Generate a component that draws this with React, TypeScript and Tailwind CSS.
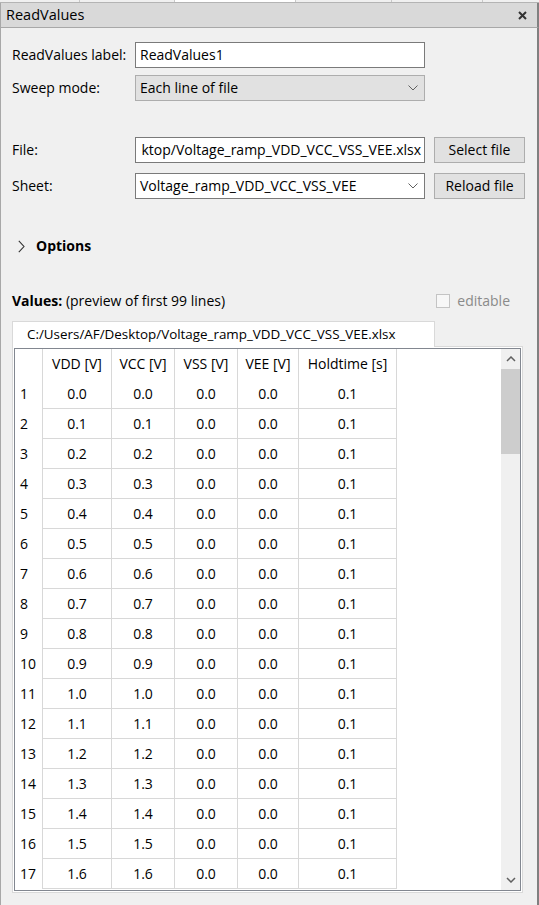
import React from "react";

const rows = Array.from({ length: 17 }, (_, i) => ({
  n: i + 1,
  vdd: (i / 10).toFixed(1),
  vcc: (i / 10).toFixed(1),
}));

const Chevron = () => (
  <svg width="10" height="6" viewBox="0 0 10 6" className="text-[#606060]">
    <path d="M0.5 0.5 L5 5 L9.5 0.5" fill="none" stroke="currentColor" strokeWidth="1" />
  </svg>
);

export default function App() {
  const cols = ["w-[69px]", "w-[63px]", "w-[63px]", "w-[61px]", "w-[98px]"];
  return (
    <div className="relative w-[539px] h-[905px] overflow-hidden bg-[#f0f0f0] text-[14px] text-black font-['Open_Sans','Noto_Sans',sans-serif] leading-none">
      {/* top tab strip */}
      <div className="flex h-[3px] border-b border-[#b4b4b4] bg-[#f0f0f0]">
        <div className="w-[80px] border-r border-[#c8c8c8]" />
        <div className="w-[95px] border-r border-[#c8c8c8]" />
        <div className="w-[121px] bg-white border-r border-[#c8c8c8]" />
        <div className="w-[96px] border-r border-[#c8c8c8]" />
        <div className="w-[91px] border-r border-[#c8c8c8]" />
        <div className="flex-1" />
      </div>
      {/* title bar */}
      <div className="flex h-[25px] items-center justify-between bg-[#d9d9d9] border-b border-[#a8a8a8] border-l border-l-[#a8a8a8] border-r-2 border-r-[#808080] pl-[5px] pr-[10px]">
        <span className="text-[14.5px]">ReadValues</span>
        <svg width="9" height="9" viewBox="0 0 9 9">
          <path d="M1 1 L8 8 M8 1 L1 8" stroke="#333" strokeWidth="2" />
        </svg>
      </div>
      {/* content */}
      <div className="flex flex-col h-[877px] border-l border-[#a8a8a8] border-r-2 border-r-[#808080] pl-[11px] pr-[12px]">
        <div className="flex flex-col gap-[7px] pt-[14px]">
          <div className="flex items-center">
            <span className="w-[123px]">ReadValues label:</span>
            <div className="w-[290px] h-[26px] bg-white border border-[#7a7a7a] flex items-center pl-[4px]">ReadValues1</div>
          </div>
          <div className="flex items-center">
            <span className="w-[123px]">Sweep mode:</span>
            <div className="w-[290px] h-[26px] bg-[#e1e1e1] border border-[#adadad] flex items-center justify-between pl-[4px] pr-[6px]">
              <span>Each line of file</span>
              <Chevron />
            </div>
          </div>
        </div>
        <div className="flex flex-col gap-[10px] pt-[36px]">
          <div className="flex items-center">
            <span className="w-[123px]">File:</span>
            <div className="w-[290px] h-[26px] bg-white border border-[#7a7a7a] flex items-center justify-end overflow-hidden pr-[3px] whitespace-nowrap">
              <span>ktop/Voltage_ramp_VDD_VCC_VSS_VEE.xlsx</span>
            </div>
            <div className="ml-[9px] w-[91px] h-[26px] bg-[#e1e1e1] border border-[#adadad] flex items-center justify-center">Select file</div>
          </div>
          <div className="flex items-center">
            <span className="w-[123px]">Sheet:</span>
            <div className="w-[290px] h-[26px] bg-white border border-[#7a7a7a] flex items-center justify-between pl-[4px] pr-[6px]">
              <span>Voltage_ramp_VDD_VCC_VSS_VEE</span>
              <Chevron />
            </div>
            <div className="ml-[9px] w-[91px] h-[26px] bg-[#e1e1e1] border border-[#adadad] flex items-center justify-center">Reload file</div>
          </div>
        </div>
        <div className="flex items-center h-[26px] mt-[34px] pl-[6px] gap-[11px]">
          <svg width="7" height="13" viewBox="0 0 7 13">
            <path d="M0.8 0.8 L6 6.5 L0.8 12.2" fill="none" stroke="#333" strokeWidth="1.1" />
          </svg>
          <span className="font-bold">Options</span>
        </div>
        <div className="flex items-center justify-between h-[20px] mt-[32px] pr-[15px]">
          <span>
            <span className="font-bold">Values:</span> (preview of first 99 lines)
          </span>
          <div className="flex items-center gap-[7px] text-[#8a8a8a]">
            <div className="w-[14px] h-[14px] border border-[#c4c4c4] bg-[#f7f7f7]" />
            <span>editable</span>
          </div>
        </div>
        {/* tab */}
        <div className="flex mt-[10px]">
          <div className="h-[26px] w-[423px] bg-white border border-b-0 border-[#d9d9d9] flex items-center pl-[14px] -mb-px relative z-10 text-[13.4px] whitespace-nowrap">
            C:/Users/AF/Desktop/Voltage_ramp_VDD_VCC_VSS_VEE.xlsx
          </div>
        </div>
        <div className="w-[511px] h-[547px] bg-white border border-[#d9d9d9] p-px">
          <div className="flex h-full border border-[#828790] bg-white overflow-hidden">
            <div className="flex flex-col flex-1">
              <div className="flex h-[30px] flex-none">
                <div className="w-[28px] border-r border-[#d8d8d8]" />
                {["VDD [V]", "VCC [V]", "VSS [V]", "VEE [V]", "Holdtime [s]"].map((h, i) => (
                  <div key={h} className={`${cols[i]} border-r border-[#d8d8d8] flex items-center justify-center`}>{h}</div>
                ))}
              </div>
              {rows.map((r) => (
                <div key={r.n} className="flex h-[30px] flex-none">
                  <div className="w-[28px] border-r border-[#d8d8d8] flex items-center pl-[5px]">{r.n}</div>
                  {[r.vdd, r.vcc, "0.0", "0.0", "0.1"].map((v, i) => (
                    <div key={i} className={`${cols[i]} border-r border-b border-[#d8d8d8] flex items-center justify-center`}>{v}</div>
                  ))}
                </div>
              ))}
            </div>
            {/* scrollbar */}
            <div className="w-[19px] flex flex-col bg-[#f0f0f0]">
              <div className="h-[20px] flex items-center justify-center">
                <svg width="10" height="6" viewBox="0 0 10 6"><path d="M1 5 L5 1 L9 5" fill="none" stroke="#606060" strokeWidth="1.5" /></svg>
              </div>
              <div className="h-[85px] bg-[#cdcdcd]" />
              <div className="flex-1" />
              <div className="h-[20px] flex items-center justify-center">
                <svg width="10" height="6" viewBox="0 0 10 6"><path d="M1 1 L5 5 L9 1" fill="none" stroke="#606060" strokeWidth="1.5" /></svg>
              </div>
            </div>
          </div>
        </div>
      </div>
    </div>
  );
}
